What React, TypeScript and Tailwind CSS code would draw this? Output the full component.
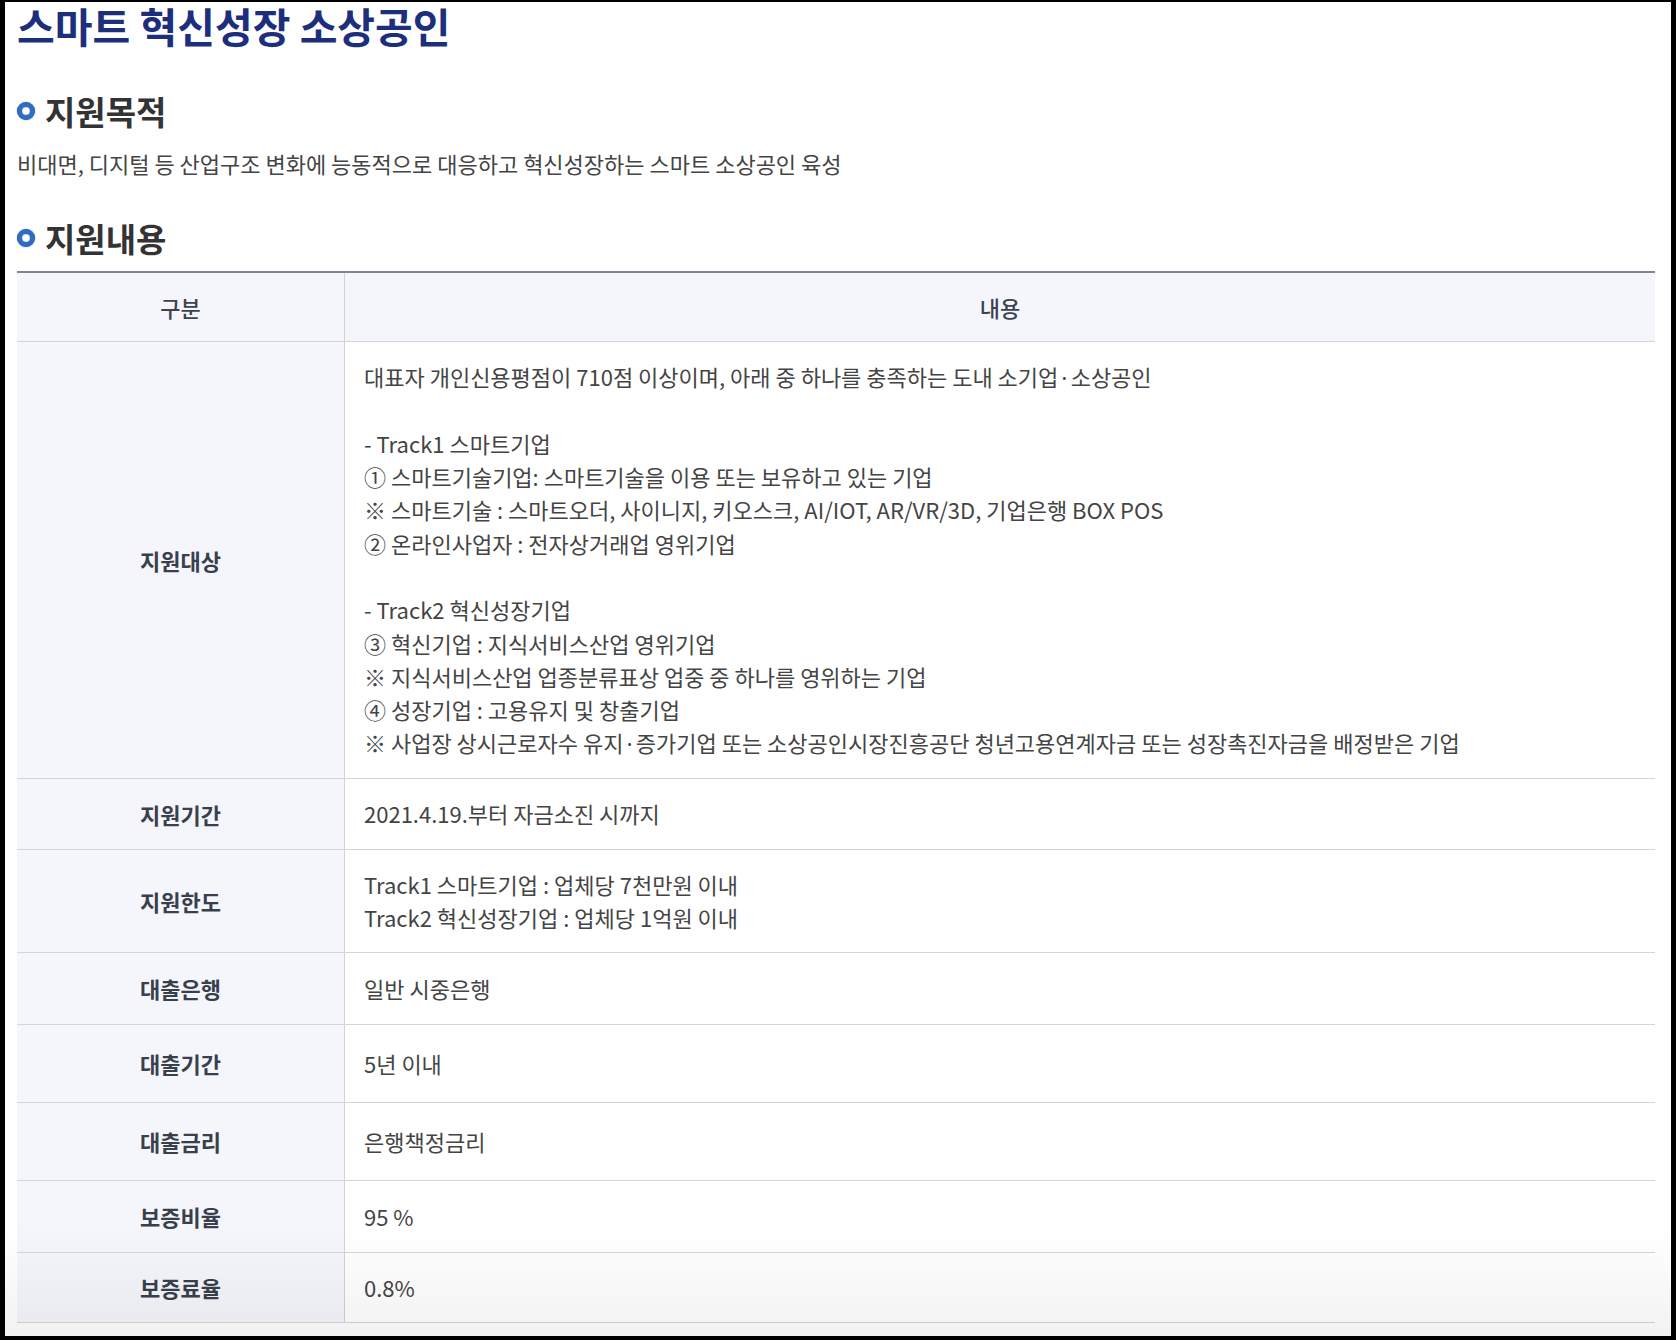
const FONT = "font-['Noto_Sans_CJK_KR','Noto_Sans_KR',sans-serif]";

interface Row {
  label: string;
  lines: string[];
  height: string;
}

const rows: Row[] = [
  {
    label: "지원대상",
    height: "h-[437px]",
    lines: [
      "대표자 개인신용평점이 710점 이상이며, 아래 중 하나를 충족하는 도내 소기업·소상공인",
      "",
      "- Track1 스마트기업",
      "① 스마트기술기업: 스마트기술을 이용 또는 보유하고 있는 기업",
      "※ 스마트기술 : 스마트오더, 사이니지, 키오스크, AI/IOT, AR/VR/3D, 기업은행 BOX POS",
      "② 온라인사업자 : 전자상거래업 영위기업",
      "",
      "- Track2 혁신성장기업",
      "③ 혁신기업 : 지식서비스산업 영위기업",
      "※ 지식서비스산업 업종분류표상 업중 중 하나를 영위하는 기업",
      "④ 성장기업 : 고용유지 및 창출기업",
      "※ 사업장 상시근로자수 유지·증가기업 또는 소상공인시장진흥공단 청년고용연계자금 또는 성장촉진자금을 배정받은 기업",
    ],
  },
  { label: "지원기간", height: "h-[71px]", lines: ["2021.4.19.부터 자금소진 시까지"] },
  {
    label: "지원한도",
    height: "h-[103px]",
    lines: ["Track1 스마트기업 : 업체당 7천만원 이내", "Track2 혁신성장기업 : 업체당 1억원 이내"],
  },
  { label: "대출은행", height: "h-[72px]", lines: ["일반 시중은행"] },
  { label: "대출기간", height: "h-[78px]", lines: ["5년 이내"] },
  { label: "대출금리", height: "h-[78px]", lines: ["은행책정금리"] },
  { label: "보증비율", height: "h-[72px]", lines: ["95 %"] },
  { label: "보증료율", height: "h-[70px]", lines: ["0.8%"] },
];

function Bullet() {
  return (
    <span className="inline-block h-[18px] w-[18px] shrink-0 rounded-full border-[5px] border-[#2f6cc2] bg-white shadow-[inset_0_0_1px_#1b4a96,0_0_1px_#1b4a96]" />
  );
}

function SectionTitle({ children, className }: { children: string; className: string }) {
  return (
    <h2 className={`flex items-center gap-[10px] text-[33px] font-bold leading-[40px] text-[#333] ${className}`}>
      <Bullet />
      {children}
    </h2>
  );
}

export default function App() {
  return (
    <div className={`h-[1340px] w-[1676px] bg-black pb-[4px] pl-[5px] pr-[5px] pt-[2px] ${FONT}`}>
      <div className="relative h-full overflow-hidden bg-white px-[12px]">
        <h1 className="h-[46px] text-[41px] font-bold leading-[46px] text-[#1d2f7c]">
          스마트 혁신성장 소상공인
        </h1>

        <SectionTitle className="mt-[43px]">지원목적</SectionTitle>
        <p className="mt-[17px] text-[22px] leading-[30px] text-[#444]">
          비대면, 디지털 등 산업구조 변화에 능동적으로 대응하고 혁신성장하는 스마트 소상공인 육성
        </p>

        <SectionTitle className="mt-[40px]">지원내용</SectionTitle>

        <div className="mt-[13px] w-[1638px] border-t-2 border-[#7f8398] text-[22px] text-[#444]">
          <div className="grid h-[69px] grid-cols-[327px_1fr] border-b border-[#d5d5d5] bg-[#f4f6fc]">
            <div className="flex items-center justify-center font-medium text-[#3d4250]">구분</div>
            <div className="flex items-center justify-center border-l border-[#d2d2d2] font-medium text-[#3d4250]">
              내용
            </div>
          </div>
          {rows.map((row) => (
            <div
              key={row.label}
              className={`grid grid-cols-[327px_1fr] border-b border-[#d5d5d5] ${row.height}`}
            >
              <div className="flex items-center justify-center bg-[#f4f6fc] font-semibold text-[#3a3f4c]">
                {row.label}
              </div>
              <div className="flex flex-col justify-center border-l border-[#d2d2d2] pl-[19px] leading-[33.3px]">
                {row.lines.map((line, i) => (
                  <div key={i} className="h-[33.3px] whitespace-nowrap">
                    {line}
                  </div>
                ))}
              </div>
            </div>
          ))}
        </div>

        {/* soft shade at the bottom edge */}
        <div className="pointer-events-none absolute bottom-0 left-0 right-0 h-[110px] bg-gradient-to-b from-transparent to-[#0000000d]" />
      </div>
    </div>
  );
}
